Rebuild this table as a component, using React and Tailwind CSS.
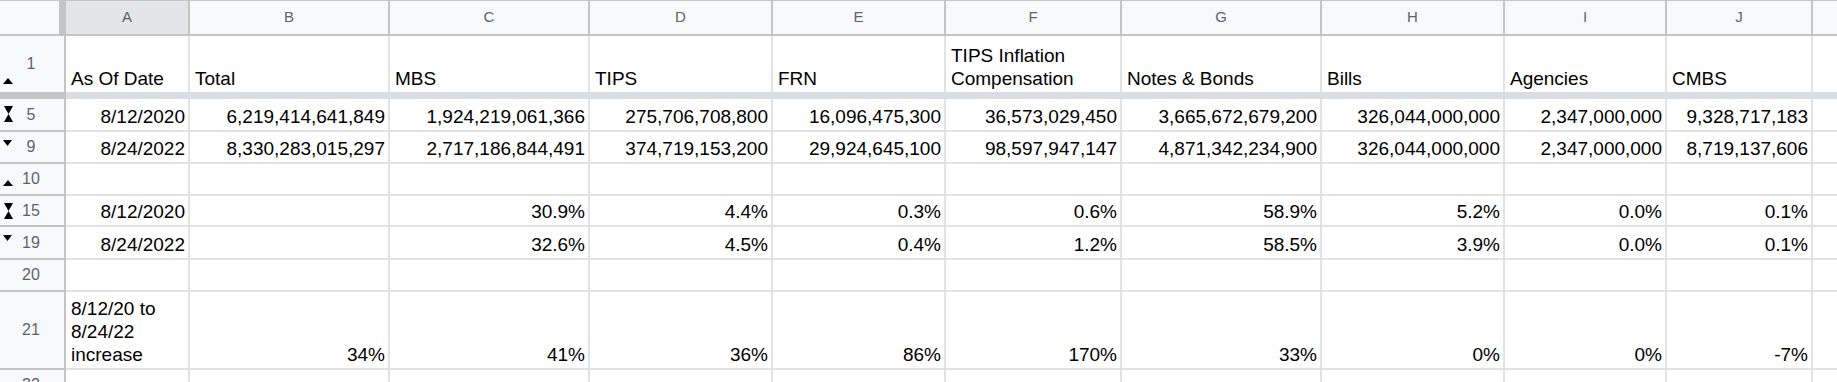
import React from "react";

const COLS = [
  { key: "A", w: "w-[124px]" },
  { key: "B", w: "w-[200px]" },
  { key: "C", w: "w-[200px]" },
  { key: "D", w: "w-[183px]" },
  { key: "E", w: "w-[173px]" },
  { key: "F", w: "w-[176px]" },
  { key: "G", w: "w-[200px]" },
  { key: "H", w: "w-[183px]" },
  { key: "I", w: "w-[162px]" },
  { key: "J", w: "w-[146px]" },
];

const HEADINGS = [
  "As Of Date",
  "Total",
  "MBS",
  "TIPS",
  "FRN",
  "TIPS Inflation Compensation",
  "Notes & Bonds",
  "Bills",
  "Agencies",
  "CMBS",
];

const ROWS = [
  {
    n: "5",
    h: "h-[33px]",
    icon: "both",
    cells: ["8/12/2020", "6,219,414,641,849", "1,924,219,061,366", "275,706,708,800", "16,096,475,300", "36,573,029,450", "3,665,672,679,200", "326,044,000,000", "2,347,000,000", "9,328,717,183"],
  },
  {
    n: "9",
    h: "h-[32px]",
    icon: "down",
    cells: ["8/24/2022", "8,330,283,015,297", "2,717,186,844,491", "374,719,153,200", "29,924,645,100", "98,597,947,147", "4,871,342,234,900", "326,044,000,000", "2,347,000,000", "8,719,137,606"],
  },
  { n: "10", h: "h-[32px]", icon: "up", cells: [] },
  {
    n: "15",
    h: "h-[31px]",
    icon: "both",
    cells: ["8/12/2020", "", "30.9%", "4.4%", "0.3%", "0.6%", "58.9%", "5.2%", "0.0%", "0.1%"],
  },
  {
    n: "19",
    h: "h-[33px]",
    icon: "down",
    cells: ["8/24/2022", "", "32.6%", "4.5%", "0.4%", "1.2%", "58.5%", "3.9%", "0.0%", "0.1%"],
  },
  { n: "20", h: "h-[32px]", cells: [] },
  {
    n: "21",
    h: "h-[78px]",
    cells: ["8/12/20 to 8/24/22 increase", "34%", "41%", "36%", "86%", "170%", "33%", "0%", "0%", "-7%"],
    wrapFirst: true,
  },
  { n: "22", h: "h-[32px]", cells: [] },
];

const GroupIcon = ({ type }) => {
  if (type === "up")
    return (
      <svg className="absolute left-[3px] bottom-[8px]" width="10" height="6" viewBox="0 0 10 6">
        <path d="M0 6L5 0L10 6Z" fill="#000" />
      </svg>
    );
  if (type === "down")
    return (
      <svg className="absolute left-[3px] top-[8px]" width="9" height="6" viewBox="0 0 9 6">
        <path d="M0 0L9 0L4.5 6Z" fill="#000" />
      </svg>
    );
  if (type === "both")
    return (
      <svg className="absolute left-[4px] top-[7px]" width="9" height="16" viewBox="0 0 9 16">
        <path d="M0 0L9 0L4.5 8Z M4.5 8L9 16L0 16Z" fill="#000" />
      </svg>
    );
  return null;
};

const RowHeader = ({ n, icon, noBorder }) => (
  <div
    className={`relative w-[66px] shrink-0 bg-[#f8f9fa] border-r-2 border-[#c4c4c4] flex items-center justify-center text-[16px] text-[#5f6368] ${
      noBorder ? "" : "border-b-2"
    }`}
  >
    {icon && <GroupIcon type={icon} />}
    <span className="ml-[-2px]">{n}</span>
  </div>
);

const App = () => {
  return (
    <div className="w-screen h-[382px] overflow-hidden bg-white font-['Liberation_Sans',Arial,sans-serif] text-black">
      {/* column letters */}
      <div className="flex h-[36px] border-t border-b-2 border-[#c4c4c4] bg-[#f8f9fa]">
        <div className="w-[59px] shrink-0" />
        <div className="w-[7px] shrink-0 bg-[#c4c4c4]" />
        {COLS.map((c) => (
          <div
            key={c.key}
            className={`${c.w} shrink-0 border-r-2 border-[#c4c4c4] flex items-center justify-center text-[15px] text-[#5f6368] ${
              c.key === "A" ? "bg-[#e3e5e8]" : ""
            }`}
          >
            {c.key}
          </div>
        ))}
        <div className="flex-1" />
      </div>

      {/* row 1: headings */}
      <div className="flex h-[56px]">
        <RowHeader n="1" icon="up" noBorder />
        {COLS.map((c, i) => (
          <div
            key={c.key}
            className={`${c.w} shrink-0 border-r-2 border-[#e2e2e2] flex items-end pl-[5px] pr-[4px] pb-[2px] text-[19px] leading-[23px]`}
          >
            <div>{HEADINGS[i]}</div>
          </div>
        ))}
        <div className="flex-1" />
      </div>

      {/* frozen row divider */}
      <div className="flex h-[7px]">
        <div className="w-[66px] shrink-0 bg-[#c4c4c4]" />
        <div className="flex-1 bg-[#dadde2]" />
      </div>

      {ROWS.map((r) => (
        <div key={r.n} className={`flex ${r.h}`}>
          <RowHeader n={r.n} icon={r.icon} />
          {COLS.map((c, i) => {
            const val = r.cells[i] || "";
            const left = r.wrapFirst && i === 0;
            return (
              <div
                key={c.key}
                className={`${c.w} shrink-0 border-r-2 border-b-2 border-[#e2e2e2] flex items-end pb-[2px] text-[19px] leading-[23px] ${
                  left ? "justify-start pl-[5px] pr-[4px]" : "justify-end pr-[3px] pl-[4px] whitespace-nowrap"
                }`}
              >
                <div>{val}</div>
              </div>
            );
          })}
          <div className="flex-1 border-b-2 border-[#e2e2e2]" />
        </div>
      ))}
    </div>
  );
};

export default App;
